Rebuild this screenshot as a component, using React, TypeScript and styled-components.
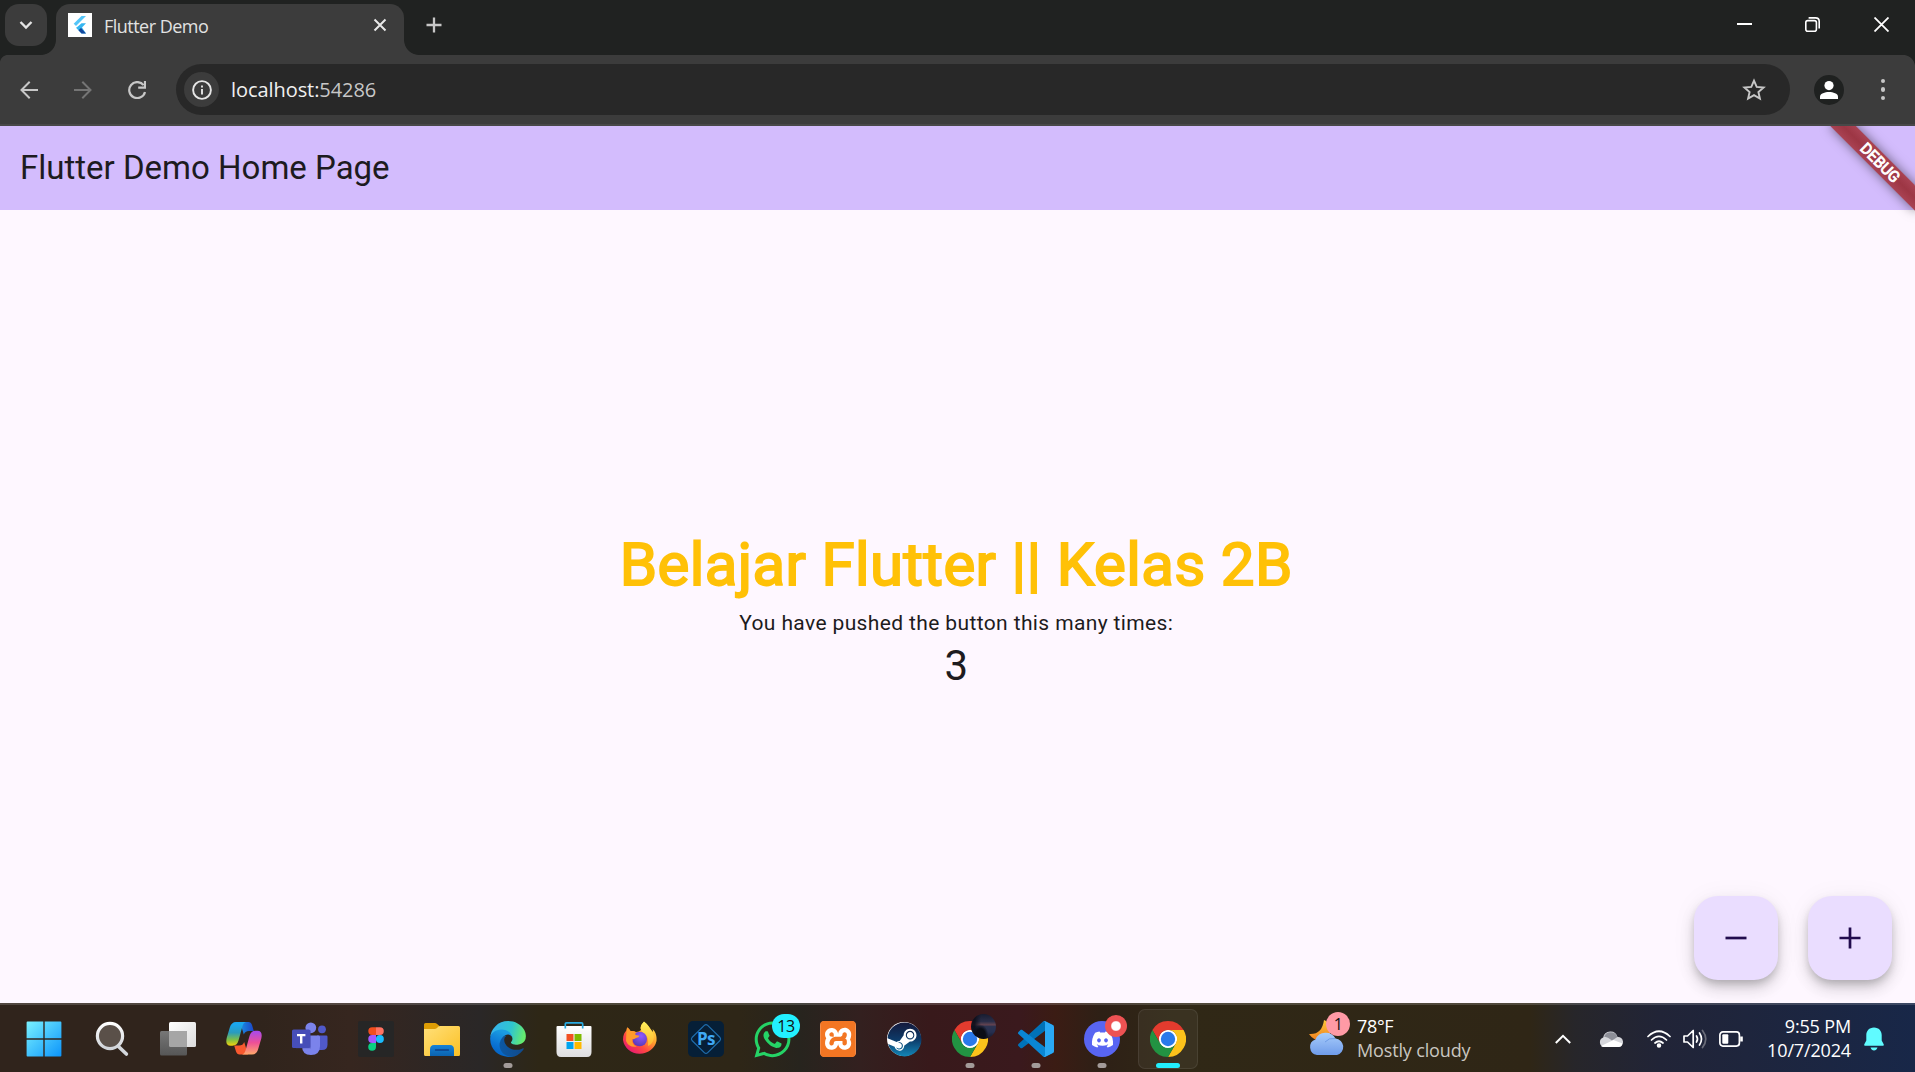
import React, { useState } from "react";
import styled, { createGlobalStyle } from "styled-components";
import { FaWhatsapp, FaSteam, FaDiscord } from "react-icons/fa";
import { SiXampp } from "react-icons/si";

const uiFont = `"Segoe UI", "Open Sans", "Noto Sans", sans-serif`;

const GlobalStyle = createGlobalStyle`
  * { box-sizing: border-box; }
  body { margin: 0; overflow: hidden; }
  button { border: 0; padding: 0; margin: 0; background: none; color: inherit; font: inherit; }
  svg { display: block; flex: none; }
`;

const Desktop = styled.div`
  width: 1915px;
  height: 1072px;
  display: flex;
  flex-direction: column;
  overflow: hidden;
  font-family: ${uiFont};
`;

/* ---------- browser chrome ---------- */

const TabStrip = styled.div`
  height: 55px;
  flex: none;
  display: flex;
  align-items: flex-start;
  padding: 4px 0 0 5px;
  background: #202221;
`;

const TabSearch = styled.button`
  width: 42px;
  height: 42px;
  border-radius: 14px;
  background: #3c3c3c;
  display: grid;
  place-items: center;
`;

const Tab = styled.div`
  position: relative;
  width: 348px;
  height: 51px;
  margin-left: 9px;
  padding: 0 15px 9px 12px;
  display: flex;
  align-items: center;
  border-radius: 14px 14px 0 0;
  background: #3c3c3c;
  color: #e2e2e2;

  &::before, &::after {
    content: "";
    position: absolute;
    bottom: 0;
    width: 15px;
    height: 15px;
  }
  &::before {
    right: 100%;
    background: radial-gradient(circle at 0 0, transparent 14.5px, #3c3c3c 15.3px);
  }
  &::after {
    left: 100%;
    background: radial-gradient(circle at 100% 0, transparent 14.5px, #3c3c3c 15.3px);
  }
`;

const TabTitle = styled.span`
  flex: 1;
  margin-left: 12px;
  padding-top: 2px;
  font-size: 18px;
  line-height: 24px;
  letter-spacing: -0.52px;
`;

const NewTab = styled.button`
  margin: 13px 0 0 22px;
`;

const WindowControls = styled.div`
  margin-left: auto;
  padding: 13px 26px 0 0;
  display: flex;
  gap: 53px;
  svg:last-child { margin-left: 1px; }
`;

const Toolbar = styled.div`
  height: 71px;
  flex: none;
  display: flex;
  align-items: center;
  padding: 0 24px 0 20px;
  border-bottom: 2px solid #484848;
  background:
    radial-gradient(circle at 8px 8px, #3c3c3c 7.6px, #202221 8.4px) 0 0 / 8px 8px no-repeat,
    radial-gradient(circle at 0 12px, #3c3c3c 11.6px, #202221 12.4px) 100% 0 / 12px 12px no-repeat,
    #3c3c3c;
`;

const NavGroup = styled.div`
  display: flex;
  gap: 36px;
`;

const Omnibox = styled.div`
  width: 1614px;
  height: 51px;
  margin-left: 30px;
  padding: 0 24px 0 8px;
  display: flex;
  align-items: center;
  border-radius: 26px;
  background: #282828;
`;

const SiteInfo = styled.span`
  width: 35px;
  height: 35px;
  border-radius: 50%;
  background: #3c3c3c;
  display: grid;
  place-items: center;
`;

const Url = styled.span`
  flex: 1;
  margin-left: 12px;
  font-size: 20px;
  line-height: 28px;
  letter-spacing: -0.07px;
  color: #c7c7c7;
  b { font-weight: 400; color: #f0f0f0; }
`;

const Profile = styled.span`
  width: 30px;
  height: 30px;
  margin-left: 24px;
  border-radius: 50%;
  background: #1f2120;
  display: grid;
  place-items: center;
`;

const Dots = styled.div`
  margin: 0 6px 0 auto;
  display: grid;
  gap: 4.2px;
  i { width: 4.4px; height: 4.4px; border-radius: 50%; background: #c7c7c7; }
`;

/* ---------- app page ---------- */

const Page = styled.main`
  position: relative;
  flex: 1;
  display: flex;
  flex-direction: column;
  overflow: hidden;
  background: #fef7ff;
  color: #1d1b20;
  font-family: Roboto, sans-serif;
`;

const AppBar = styled.header`
  height: 84px;
  flex: none;
  display: flex;
  align-items: center;
  padding: 0 20px;
  background: #d3bcfd;
  font-size: 33px;
  line-height: 42px;
`;

const Center = styled.section`
  flex: 1;
  display: flex;
  flex-direction: column;
  align-items: center;
  justify-content: center;
  padding: 1px 2.5px 0 0;
`;

const Headline = styled.div`
  font-size: 60px;
  line-height: 86px;
  letter-spacing: 0.375px;
  color: #ffc107;
  -webkit-text-stroke: 1.9px #ffc107;
`;

const Caption = styled.div`
  font-size: 21px;
  line-height: 30px;
  letter-spacing: 0.375px;
`;

const Count = styled.div`
  font-size: 42px;
  line-height: 52px;
  padding-top: 2px;
`;

const Fabs = styled.div`
  position: absolute;
  right: 23px;
  bottom: 23px;
  display: flex;
  gap: 30px;
`;

const Fab = styled.button`
  width: 84px;
  height: 84px;
  border-radius: 24px;
  background: #eaddff;
  display: grid;
  place-items: center;
  box-shadow: 0 5px 8px -2px rgba(0, 0, 0, 0.2), 0 9px 15px rgba(0, 0, 0, 0.14), 0 2px 27px rgba(0, 0, 0, 0.05);
`;

const Banner = styled.div`
  position: absolute;
  top: 0;
  right: 0;
  width: 120px;
  height: 110px;
  overflow: hidden;
`;

const Ribbon = styled.div`
  position: absolute;
  top: 41.5px;
  left: 60px;
  width: 120px;
  height: 18px;
  padding-left: 2px;
  transform-origin: 60px -41.5px;
  transform: rotate(45deg);
  background: linear-gradient(180deg, #a94253, #9d3644 50%, #a94253);
  box-shadow: 0 0 12px rgba(0, 0, 0, 0.5);
  color: #fff;
  text-align: center;
  font-size: 15.3px;
  line-height: 18px;
  -webkit-text-stroke: 0.9px #fff;
`;

/* ---------- taskbar ---------- */

const Taskbar = styled.footer`
  height: 69px;
  flex: none;
  display: flex;
  align-items: stretch;
  padding-left: 11px;
  border-top: 2px solid rgba(255, 255, 255, 0.16);
  background: linear-gradient(90deg,
    #30241c 0, #30241c 260px, #36261f 350px, #2a2727 480px, #2e2716 540px, #2e2617 740px,
    #27241e 800px, #33201f 860px, #38191b 930px, #3a191d 1020px, #3b1c14 1055px,
    #2e2016 1100px, #302816 1180px, #2f2616 1530px, #27262a 1575px, #212437 1660px, #182748 1915px) border-box;
  color: #fff;
`;

const Task = styled.div`
  position: relative;
  width: 66px;
  display: grid;
  place-items: center;
  padding-top: 1px;
  &:first-child { margin-right: 2px; }
`;

const ActiveTile = styled.span`
  position: absolute;
  left: 3px;
  top: 4px;
  width: 60px;
  height: 60px;
  border: 1px solid rgba(255, 255, 255, 0.08);
  border-radius: 7px;
  background: rgba(255, 255, 255, 0.05);
`;

const TaskIcon = styled.span`
  position: relative;
  width: 36px;
  height: 36px;
`;

const Indicator = styled.i<{ $active?: boolean }>`
  position: absolute;
  left: 50%;
  top: 58px;
  width: ${(p) => (p.$active ? 24 : 9)}px;
  height: 5px;
  border-radius: 3px;
  transform: translateX(-50%);
  background: ${(p) => (p.$active ? "#22eefc" : "#a39b99")};
`;

const Badge = styled.span<{ $x: number; $y: number; $w: number; $bg: string }>`
  position: absolute;
  left: ${(p) => p.$x}px;
  top: ${(p) => p.$y}px;
  width: ${(p) => p.$w}px;
  height: 24px;
  border-radius: 12px;
  background: ${(p) => p.$bg};
  color: #111;
  font-size: 16px;
  line-height: 24px;
  letter-spacing: -0.4px;
  text-align: center;
`;

const AppTile = styled.span<{ $bg: string; $fg: string }>`
  width: 36px;
  height: 36px;
  border-radius: 5px;
  display: grid;
  place-items: center;
  background: ${(p) => p.$bg};
  color: ${(p) => p.$fg};
  font: 700 17px/36px ${uiFont};
`;

const PsLabel = styled.span`
  grid-area: 1 / 1;
  letter-spacing: -0.6px;
`;

const Weather = styled.div`
  margin-left: 109px;
  width: 242px;
  display: flex;
`;

const WeatherIcon = styled.span`
  position: relative;
  width: 36px;
  height: 36px;
  margin: 15px 1px 0 -1px;
`;

const Lines = styled.div<{ $right?: boolean }>`
  margin-left: ${(p) => (p.$right ? 0 : 11)}px;
  padding-top: 9px;
  display: flex;
  flex-direction: column;
  text-align: ${(p) => (p.$right ? "right" : "left")};
  font-size: 18px;
  line-height: 24px;
  letter-spacing: ${(p) => (p.$right ? -0.15 : -0.35)}px;
  white-space: nowrap;
`;

const Muted = styled.span`
  color: #c9c6c0;
  letter-spacing: -0.15px;
`;

const Tray = styled.div`
  flex: 1;
  display: flex;
  align-items: center;
  padding-top: 1px;
`;

const TraySlot = styled.span<{ $ml: number }>`
  margin-left: ${(p) => p.$ml}px;
`;

const Clock = styled.div`
  width: 108px;
  align-self: flex-start;
  margin-top: -1px;
`;

const Chrome = () => (
  <svg width="36" height="36" viewBox="0 0 48 48">
    <circle cx="24" cy="24" r="12.4" fill="#fff" />
    <path fill="#e33b2e" d="M24,12H44.7812a23.9939,23.9939,0,0,0-41.5639.0029L13.6079,30l.0093-.0024A11.9852,11.9852,0,0,1,24,12Z" />
    <path fill="#fcc21b" d="M34.3913,30.0029,24.0007,48A23.994,23.994,0,0,0,44.78,12.0031H23.9989l-.0025.0093A11.985,11.985,0,0,1,34.3913,30.0029Z" />
    <path fill="#229342" d="M13.6086,30.0031,3.218,12.006A23.994,23.994,0,0,0,24.0025,48L34.3931,30.0029l-.0067-.0068a11.9852,11.9852,0,0,1-20.7778.007Z" />
    <circle cx="24" cy="24" r="9.6" fill="#2a79ea" />
  </svg>
);

const Windows = () => (
  <svg width="36" height="36" viewBox="0 0 36 36">
    <defs>
      <linearGradient id="win" x1="0" y1="0" x2="36" y2="36" gradientUnits="userSpaceOnUse">
        <stop stopColor="#7bf3ff" /><stop offset="1" stopColor="#0a93fb" />
      </linearGradient>
    </defs>
    <path fill="url(#win)" d="M1.5 .6H17.3V17.3H.6V1.5Q.6 .6 1.5 .6ZM18.7 .6H34.5Q35.4 .6 35.4 1.5V17.3H18.7ZM.6 18.7H17.3V35.4H1.5Q.6 35.4 .6 34.5ZM18.7 18.7H35.4V34.5Q35.4 35.4 34.5 35.4H18.7Z" />
  </svg>
);

const Search = () => (
  <svg width="36" height="36" viewBox="0 0 36 36">
    <defs>
      <linearGradient id="lens" x1="0" y1="0" x2="0" y2="1"><stop stopColor="#fff" /><stop offset="1" stopColor="#cfd3d8" /></linearGradient>
    </defs>
    <path d="M24.5 25.5 32.4 33" stroke="#d3d7dc" strokeWidth="3.6" strokeLinecap="round" />
    <circle cx="16" cy="15" r="12.6" fill="#5a5049" stroke="url(#lens)" strokeWidth="3.2" />
  </svg>
);

const TaskView = () => (
  <svg width="36" height="36" viewBox="0 0 36 36">
    <defs>
      <linearGradient id="tv1" x1="0" y1="0" x2="1" y2="1"><stop stopColor="#fff" /><stop offset="1" stopColor="#dcdcdc" /></linearGradient>
      <linearGradient id="tv2" x1="0" y1="0" x2="0" y2="1"><stop stopColor="#777" /><stop offset="1" stopColor="#565656" /></linearGradient>
    </defs>
    <rect x="9" y="1" width="27" height="25" rx="1.5" fill="url(#tv1)" />
    <rect x="0" y="10" width="27" height="24.5" rx="1.5" fill="url(#tv2)" />
    <path d="M9 10H27V26H10.5Q9 26 9 24.5Z" fill="#a6a6a6" />
  </svg>
);

const Copilot = () => (
  <svg width="36" height="36" viewBox="0 0 36 36">
    <defs>
      <linearGradient id="cp1" x1="0" y1="0" x2="0" y2="1"><stop offset=".1" stopColor="#1aa7ee" /><stop offset=".45" stopColor="#2a9bbd" /><stop offset=".75" stopColor="#7fbf45" /><stop offset="1" stopColor="#f4d00c" /></linearGradient>
      <linearGradient id="cp2" x1="0" y1="0" x2="0" y2="1"><stop stopColor="#a54af0" /><stop offset=".5" stopColor="#ee5096" /><stop offset="1" stopColor="#ffa96b" /></linearGradient>
      <linearGradient id="cp3" x1="0" y1="0" x2="1" y2="0"><stop stopColor="#1b8de0" /><stop offset="1" stopColor="#1b45c8" /></linearGradient>
    </defs>
    <path fill="url(#cp3)" d="M14 1H22.5Q25 1 26 4L27.8 10H23Q19 10 17.8 13.6Z" />
    <path fill="#f8592f" d="M22 33.5H13.5Q11 33.5 10 30.500L8.200 24.500H13Q17 24.500 18.200 21Z" />
    <path fill="url(#cp1)" d="M10 1H20Q17.500 1.500 16.500 5L12.500 19.500Q11 24.700 6.500 24.700H4.500Q-1 24.500 .7 17L3.800 6.500Q5.500 1 10 1Z" />
    <path fill="url(#cp2)" d="M26 33.500H16Q18.500 33 19.500 29.500L23.500 15Q25 9.800 29.500 9.800H31.500Q37 10 35.300 17.500L32.200 28Q30.500 33.500 26 33.500Z" />
  </svg>
);

const Teams = () => (
  <svg width="36" height="36" viewBox="0 0 36 36">
    <circle cx="30" cy="8.300" r="3.900" fill="#5059c9" />
    <path d="M25 14.500H34.300Q35.500 14.500 35.500 15.700V23.500Q35.500 29 30 29H25Z" fill="#5059c9" />
    <circle cx="18.800" cy="6.800" r="5.400" fill="#7b83eb" />
    <path d="M11 14.500H26.500Q28 14.500 28 16V25Q28 34 19 34T10 25V15.500Z" fill="#7b83eb" />
    <rect x="4" y="9.500" width="15" height="18" fill="#3f459f" opacity=".35" />
    <rect x="0" y="8.500" width="18.300" height="18.500" rx="1.600" fill="#464eb8" />
    <path d="M5 13H13.400V15.200H10.400V22.400H8V15.200H5Z" fill="#fff" />
  </svg>
);

const Figma = () => (
  <svg width="36" height="36" viewBox="0 0 36 36">
    <rect width="36" height="36" rx="2" fill="#262626" />
    <path d="M14.200 6.200H18V14H14.200A3.900 3.900 0 0 1 14.200 6.200Z" fill="#f24e1e" />
    <path d="M18 6.200H21.900A3.900 3.900 0 0 1 21.900 14H18Z" fill="#ff7262" />
    <path d="M14.200 14H18V21.900H14.200A3.900 3.900 0 0 1 14.200 14Z" fill="#a259ff" />
    <circle cx="21.900" cy="18" r="3.950" fill="#1abcfe" />
    <path d="M14.200 21.900H18V25.800A3.900 3.900 0 1 1 14.200 21.900Z" fill="#0acf83" />
  </svg>
);

const Folder = () => (
  <svg width="36" height="36" viewBox="0 0 36 36">
    <defs>
      <linearGradient id="fd1" x1="0" y1="0" x2="1" y2="1"><stop stopColor="#ffe07a" /><stop offset="1" stopColor="#fcc024" /></linearGradient>
      <linearGradient id="fd2" x1="0" y1="0" x2="0" y2="1"><stop stopColor="#1582d8" /><stop offset="1" stopColor="#0b63b0" /></linearGradient>
    </defs>
    <path d="M0 3.500Q0 2 1.500 2H11Q12 2 12.800 2.700L15.500 5V14H0Z" fill="#dd9c04" />
    <path d="M0 8H10.500Q12 8 13 7L14.500 5.500Q15.200 5 16 5H34.500Q36 5 36 6.500V33.500Q36 35 34.500 35H1.500Q0 35 0 33.500Z" fill="url(#fd1)" />
    <path d="M6 35V28.500Q6 24 10 24H26Q30 24 30 28.500V35Z" fill="url(#fd2)" />
    <path d="M11.500 29H24.500" stroke="#0c3f86" strokeWidth="1.300" strokeLinecap="round" />
  </svg>
);

const Edge = () => (
  <svg width="36" height="36" viewBox="0 0 256 258">
    <defs>
      <linearGradient id="ed1" x1="60" y1="177" x2="241" y2="177" gradientUnits="userSpaceOnUse"><stop stopColor="#0c59a4" /><stop offset="1" stopColor="#114a8b" /></linearGradient>
      <linearGradient id="ed2" x1="120" y1="90" x2="60" y2="220" gradientUnits="userSpaceOnUse"><stop stopColor="#1b9de2" /><stop offset=".7" stopColor="#0b74d4" /><stop offset="1" stopColor="#0668c9" /></linearGradient>
      <linearGradient id="ed3" x1="20" y1="60" x2="240" y2="120" gradientUnits="userSpaceOnUse"><stop stopColor="#35b4ea" /><stop offset=".55" stopColor="#2fc6cf" /><stop offset="1" stopColor="#66eb6e" /></linearGradient>
    </defs>
    <path fill="url(#ed1)" d="M235.680 195.460a93.730 93.730 0 01-10.540 4.710 101.870 101.870 0 01-35.900 6.460c-47.320 0-88.540-32.550-88.540-74.320A31.480 31.480 0 01117.130 105c-42.800 1.800-53.800 46.400-53.800 72.530 0 73.880 68.090 81.370 82.760 81.370 7.910 0 19.840-2.300 27-4.560l1.310-.44a128.340 128.340 0 0066.600-52.800 4 4 0 00-5.320-5.640z" />
    <path fill="url(#ed2)" d="M105.730 241.420A79.200 79.200 0 0183 220.080a80.720 80.720 0 0129.530-120c3.120-1.470 8.450-4.130 15.540-4a32.350 32.350 0 0125.690 13 31.880 31.880 0 016.360 18.660c0-.21 24.460-79.600-80-79.600-43.900 0-80 41.660-80 78.210a130.150 130.150 0 0012.110 56 128 128 0 00156.380 67.110 75.550 75.550 0 01-62.780-8z" />
    <path fill="url(#ed3)" d="M152.330 148.860c-.81 1.050-3.300 2.500-3.300 5.660 0 2.610 1.700 5.120 4.720 7.230 14.380 10 41.490 8.680 41.560 8.680a59.560 59.560 0 0030.270-8.350A61.380 61.380 0 00256 109.060c.26-22.410-8-37.310-11.340-43.910C223.460 23.840 177.720 0 128 0A128 128 0 000 126.200c.48-36.540 36.800-66.050 80-66.050 3.500 0 23.460.34 42 10.070 16.340 8.580 24.900 18.940 30.850 29.210 6.180 10.670 7.280 24.150 7.280 29.520s-2.740 13.330-7.780 19.910z" />
  </svg>
);

const Store = () => (
  <svg width="36" height="36" viewBox="0 0 36 36">
    <defs>
      <linearGradient id="st" x1="0" y1="0" x2="0" y2="1"><stop stopColor="#fff" /><stop offset="1" stopColor="#dedee0" /></linearGradient>
    </defs>
    <path d="M.5 6Q.5 5 1.500 5H34.500Q35.500 5 35.500 6V31Q35.500 36 31 36H5Q.5 36 .5 31Z" fill="url(#st)" />
    <path d="M9.300 7.500V3Q9.300 1.800 10.500 1.800H25.500Q26.700 1.800 26.700 3V7.500" fill="none" stroke="#29abe2" strokeWidth="1.700" />
    <path d="M10.500 13H17.500V20H10.500Z" fill="#f25022" />
    <path d="M18.500 13H25.500V20H18.500Z" fill="#7fba00" />
    <path d="M10.500 21H17.500V28H10.500Z" fill="#00a4ef" />
    <path d="M18.500 21H25.500V28H18.500Z" fill="#ffb900" />
  </svg>
);

const Firefox = () => (
  <svg width="36" height="36" viewBox="0 0 36 36">
    <defs>
      <linearGradient id="ff1" x1="30" y1="4" x2="8" y2="33" gradientUnits="userSpaceOnUse"><stop stopColor="#ffe14a" /><stop offset=".35" stopColor="#ffa02c" /><stop offset=".65" stopColor="#ff4a3f" /><stop offset="1" stopColor="#e3127a" /></linearGradient>
      <linearGradient id="ff2" x1="0" y1="0" x2="0" y2="1"><stop stopColor="#fff15c" /><stop offset="1" stopColor="#ffb52d" /></linearGradient>
      <radialGradient id="ff3" cx=".6" cy=".3" r=".7"><stop stopColor="#9059ff" /><stop offset="1" stopColor="#5a3bb8" /></radialGradient>
    </defs>
    <path fill="url(#ff1)" d="M22 1C27 4 28 8 31 11Q31 9 30.500 8C34 11 35 16 34.500 20A17 16 0 0 1 1 19C1 14 2.500 11 4.500 9.500L5 6.500Q7 7 8.500 10Q12 9.500 14 11Q17 11 19 9Q17.500 4 22 1Z" />
    <path fill="url(#ff2)" d="M22 .6C26 3.500 27.500 7.500 30.500 11.500C34 17 30 24 26 25Q27.500 15 21 12Q16 7 22 .6Z" />
    <circle cx="17.700" cy="18" r="7.300" fill="url(#ff3)" />
    <path fill="#ff9a2b" d="M4.500 9.500 5.200 6.300Q7 7.300 8.500 10Q11.500 9.500 13.800 11.200Q13 12.500 13.500 14L17.500 14.700Q17 16.700 14 17Q12.500 18.500 10.500 18Q9.800 24 15 25.500Q7 27 4 20Z" />
  </svg>
);

const PsFrame = styled.svg`
  grid-area: 1 / 1;
`;

const Photoshop = () => (
  <AppTile $bg="#061f37" $fg="#3fa9f5">
    <PsFrame width="36" height="36" viewBox="0 0 36 36">
      <path d="M16.300 4.400Q18 2.800 19.700 4.400L32 16.500Q33.200 18 32 19.500L19.700 31.600Q18 33.200 16.300 31.600L4 19.500Q2.800 18 4 16.500Z" fill="none" stroke="#1f6dac" strokeWidth="1.200" />
    </PsFrame>
    <PsLabel>Ps</PsLabel>
  </AppTile>
);

const Xampp = () => (
  <AppTile $bg="#fff" $fg="#f37623">
    <SiXampp size={36} />
  </AppTile>
);

const SteamDisc = styled.span`
  width: 34px;
  height: 34px;
  margin: 1px;
  border-radius: 50%;
  display: grid;
  place-items: center;
  background: #fff;
  svg path { fill: url(#steam); }
`;

const Steam = () => (
  <SteamDisc>
    <svg width="0" height="0" style={{ position: "absolute" }}>
      <defs>
        <linearGradient id="steam" x1="0" y1="0" x2="0" y2="1"><stop stopColor="#14193c" /><stop offset=".5" stopColor="#0d3a68" /><stop offset="1" stopColor="#1387b8" /></linearGradient>
      </defs>
    </svg>
    <FaSteam size={35} />
  </SteamDisc>
);

const VsCode = () => (
  <svg width="36" height="36" viewBox="0 0 100 100">
    <path fill="#0072b8" d="M96.461 10.796L75.857.876C73.472-.273 70.622.212 68.750 2.083L1.299 63.583C-.516 65.237-.514 68.094 1.303 69.745L6.813 74.754C8.298 76.104 10.535 76.204 12.134 74.990L93.361 13.370C96.086 11.303 100 13.246 100 16.667V16.427C100 14.027 98.625 11.838 96.461 10.796Z" />
    <path fill="#0a86d4" d="M96.461 89.204L75.857 99.125C73.472 100.273 70.622 99.788 68.750 97.917L1.299 36.417C-.516 34.763-.514 31.906 1.303 30.255L6.813 25.246C8.298 23.896 10.535 23.796 12.134 25.010L93.361 86.630C96.086 88.697 100 86.754 100 83.333V83.573C100 85.974 98.625 88.162 96.461 89.204Z" />
    <path fill="#2aa9f5" d="M75.858 99.126C73.472 100.274 70.622 99.789 68.750 97.917C71.056 100.223 75 98.590 75 95.328V4.672C75 1.410 71.056-.223 68.750 2.083C70.622.211 73.472-.274 75.858.874L96.459 10.781C98.623 11.822 100 14.011 100 16.413V83.587C100 85.989 98.623 88.179 96.459 89.220L75.858 99.126Z" />
  </svg>
);

const DiscordDisc = styled.span`
  width: 36px;
  height: 36px;
  border-radius: 50%;
  display: grid;
  place-items: center;
  background: #5865f2;
  color: #fff;
`;

const Avatar = styled.span`
  position: absolute;
  left: 19px;
  top: -7px;
  width: 25px;
  height: 25px;
  border-radius: 50%;
  background:
    linear-gradient(90deg, rgba(10, 12, 22, 0.85) 15%, rgba(10, 12, 22, 0) 40%),
    radial-gradient(ellipse at 38% 85%, #0b0d16 0 22%, rgba(11, 13, 22, 0) 36%),
    linear-gradient(180deg, #171c30 0, #2b2e48 30%, #4d3c4e 38%, #644350 43%, #2c3350 50%, #262f50 72%, #141827 100%);
`;

const RecordBadge = styled.span`
  position: absolute;
  left: 21px;
  top: -6px;
  width: 22px;
  height: 22px;
  border-radius: 50%;
  background: radial-gradient(circle, #fff 4.200px, #ee5253 5.500px);
`;

type TaskItem = { name: string; icon: React.ReactNode; running?: boolean; active?: boolean };

const tasks: TaskItem[] = [
  { name: "start", icon: <Windows /> },
  { name: "search", icon: <Search /> },
  { name: "task-view", icon: <TaskView /> },
  { name: "copilot", icon: <Copilot /> },
  { name: "teams", icon: <Teams /> },
  { name: "figma", icon: <Figma /> },
  { name: "explorer", icon: <Folder /> },
  { name: "edge", icon: <Edge />, running: true },
  { name: "store", icon: <Store /> },
  { name: "firefox", icon: <Firefox /> },
  { name: "photoshop", icon: <Photoshop /> },
  { name: "whatsapp", icon: <><FaWhatsapp size={41} color="#25d366" style={{ margin: "-2px -2.5px" }} /><Badge $x={18} $y={-7} $w={28} $bg="#22f0ff">13</Badge></> },
  { name: "xampp", icon: <Xampp /> },
  { name: "steam", icon: <Steam /> },
  { name: "chrome-profile", icon: <><Chrome /><Avatar /></>, running: true },
  { name: "vscode", icon: <VsCode />, running: true },
  { name: "discord", icon: <><DiscordDisc><FaDiscord size={23} /></DiscordDisc><RecordBadge /></>, running: true },
  { name: "chrome", icon: <Chrome />, running: true, active: true },
];

export default function App() {
  const [count, setCount] = useState(3);
  return (
    <Desktop>
      <GlobalStyle />
      <TabStrip>
        <TabSearch>
          <svg width="14" height="10" viewBox="0 0 14 10"><path d="M1.500 2 7 7.500 12.500 2" fill="none" stroke="#e4e4e4" strokeWidth="2.400" /></svg>
        </TabSearch>
        <Tab>
          <svg width="24" height="24" viewBox="0 0 24 24">
            <rect width="24" height="24" fill="#fff" />
            <path d="M13.500 3H18L8 13 5.700 10.800Z" fill="#54c5f8" />
            <path d="M13.500 10.300H18L14 14.400 18 20.500H13.500L8 14.800 9.800 13.500Z" fill="#35b5f0" />
            <path d="M10.500 17.300 13 15 18 20.500H13.500Z" fill="#15479c" />
          </svg>
          <TabTitle>Flutter Demo</TabTitle>
          <svg width="18" height="18" viewBox="0 0 18 18"><path d="M3.500 3.500 14.500 14.500M14.500 3.500 3.500 14.500" stroke="#e8e8e8" strokeWidth="2" /></svg>
        </Tab>
        <NewTab>
          <svg width="16" height="16" viewBox="0 0 16 16"><path d="M8 .5V15.500M.5 8H15.500" stroke="#c7c7c7" strokeWidth="2.300" /></svg>
        </NewTab>
        <WindowControls>
          <svg width="15" height="15" viewBox="0 0 15 15"><path d="M0 7H15" stroke="#fff" strokeWidth="2" /></svg>
          <svg width="15" height="15" viewBox="0 0 15 15" fill="none" stroke="#fff" strokeWidth="1.600"><rect x=".8" y="3.600" width="10.600" height="10.600" rx="2" /><path d="M3.600 .9H10.500Q14.200 .9 14.200 4.500V11.400" /></svg>
          <svg width="15" height="15" viewBox="0 0 15 15"><path d="M.5 .5 14.500 14.500M14.500 .5 .5 14.500" stroke="#fff" strokeWidth="1.800" /></svg>
        </WindowControls>
      </TabStrip>
      <Toolbar>
        <NavGroup>
          <svg width="18" height="18" viewBox="0 0 18 18" fill="none" stroke="#c7c7c7" strokeWidth="2"><path d="M18 9H1.800M9.700 .8 1.500 9 9.700 17.200" /></svg>
          <svg width="18" height="18" viewBox="0 0 18 18" fill="none" stroke="#757575" strokeWidth="2"><path d="M0 9H16.200M8.300 .8 16.500 9 8.300 17.200" /></svg>
          <svg width="18" height="18" viewBox="0 0 18 18" fill="none" stroke="#c7c7c7" strokeWidth="2.200"><path d="M15.600 4.200A8 8 0 1 0 17 11M17 0V6.600H10.200" /></svg>
        </NavGroup>
        <Omnibox>
          <SiteInfo>
            <svg width="20" height="20" viewBox="0 0 20 20"><circle cx="10" cy="10" r="8.900" fill="none" stroke="#e6e6e6" strokeWidth="1.900" /><path d="M10 9V14.500M10 5.500V7.500" stroke="#e6e6e6" strokeWidth="1.900" /></svg>
          </SiteInfo>
          <Url><b>localhost:</b>54286</Url>
          <svg width="24" height="23" viewBox="0 0 24 23"><path d="M12 2.600 14.700 8.900 21.600 9.500 16.400 14 17.900 20.600 12 17.100 6.100 20.600 7.600 14 2.400 9.500 9.300 8.900Z" fill="none" stroke="#c7c7c7" strokeWidth="1.900" /></svg>
        </Omnibox>
        <Profile>
          <svg width="18" height="18" viewBox="0 0 18 18" fill="#fff"><circle cx="9" cy="4.600" r="4.600" /><path d="M0 18V15.500C0 12.500 5 11 9 11S18 12.500 18 15.500V18Z" /></svg>
        </Profile>
        <Dots><i /><i /><i /></Dots>
      </Toolbar>

      <Page>
        <AppBar>Flutter Demo Home Page</AppBar>
        <Center>
          <Headline>Belajar Flutter || Kelas 2B</Headline>
          <Caption>You have pushed the button this many times:</Caption>
          <Count>{count}</Count>
        </Center>
        <Fabs>
          <Fab aria-label="Decrement" onClick={() => setCount(count - 1)}>
            <svg width="22" height="22" viewBox="0 0 22 22"><path d="M.5 11H21.500" stroke="#220c4e" strokeWidth="2.700" /></svg>
          </Fab>
          <Fab aria-label="Increment" onClick={() => setCount(count + 1)}>
            <svg width="22" height="22" viewBox="0 0 22 22"><path d="M.5 11H21.500M11 .5V21.500" stroke="#220c4e" strokeWidth="2.700" /></svg>
          </Fab>
        </Fabs>
        <Banner><Ribbon>DEBUG</Ribbon></Banner>
      </Page>

      <Taskbar>
        {tasks.map((t) => (
          <Task key={t.name}>
            {t.active && <ActiveTile />}
            <TaskIcon>{t.icon}</TaskIcon>
            {t.running && <Indicator $active={t.active} />}
          </Task>
        ))}
        <Weather>
          <WeatherIcon>
            <svg width="36" height="36" viewBox="0 0 36 36">
              <defs>
                <linearGradient id="moon" x1="0" y1="0" x2="0" y2="1"><stop stopColor="#ffc83a" /><stop offset="1" stopColor="#ef7d1d" /></linearGradient>
                <linearGradient id="cloud" x1="0" y1="0" x2="0" y2="1"><stop stopColor="#a9cdfb" /><stop offset="1" stopColor="#6f9cea" /></linearGradient>
              </defs>
              <path d="M15 0C24 3 24 20 12 21Q4 20 0 14Q13 15 15 0Z" fill="url(#moon)" />
              <path d="M8 35A8 8 0 0 1 6.500 19.500A11 10.500 0 0 1 26.500 18.500A8.400 8.400 0 0 1 28 35Z" fill="url(#cloud)" />
              <path d="M16 22Q20 17.500 26 18.500" fill="none" stroke="#6f9ce6" strokeWidth="1" />
            </svg>
            <Badge $x={17} $y={-8} $w={24} $bg="#ff9aa5">1</Badge>
          </WeatherIcon>
          <Lines><span>78°F</span><Muted>Mostly cloudy</Muted></Lines>
        </Weather>
        <Tray>
          <TraySlot $ml={3}><svg width="16" height="10" viewBox="0 0 16 10"><path d="M.8 9 8 1.800 15.200 9" fill="none" stroke="#fff" strokeWidth="2" /></svg></TraySlot>
          <TraySlot $ml={28}>
            <svg width="24" height="16" viewBox="0 0 24 16">
              <path d="M4.500 16A5 5 0 0 1 4.200 6.500A7.300 7.300 0 0 1 18.500 6A5 5 0 0 1 19.500 16Z" fill="#d6d7dc" />
              <path d="M5 5.500A7.300 7.300 0 0 1 18.500 6L13 9.500Q9 5.800 5 5.500Z" fill="#8d8f98" />
              <path d="M2 15 14.500 9 23.500 12.500Q22.800 16 19.500 16H4.500Q3 16 2 15Z" fill="#fff" />
            </svg>
          </TraySlot>
          <TraySlot $ml={24}>
            <svg width="24" height="18" viewBox="0 0 24 18" fill="none" stroke="#fff" strokeWidth="1.700" strokeLinecap="round">
              <path d="M1 6.500Q12-4 23 6.500M4.500 10Q12 2.800 19.500 10M8 13Q12 9.500 16 13" /><circle cx="12" cy="15.600" r="1.400" fill="#fff" />
            </svg>
          </TraySlot>
          <TraySlot $ml={12}>
            <svg width="24" height="20" viewBox="0 0 24 20" fill="none" stroke="#fff" strokeWidth="1.700" strokeLinecap="round" strokeLinejoin="round">
              <path d="M1 7H4.500L10.200 1.500V18.500L4.500 13H1Z" /><path d="M13.500 7Q15.500 10 13.500 13M16.500 4Q20.500 10 16.500 16" /><path d="M19.500 1.500Q26 10 19.500 18.500" stroke="#6a6c79" />
            </svg>
          </TraySlot>
          <TraySlot $ml={12}>
            <svg width="24" height="16" viewBox="0 0 24 16" fill="none" stroke="#fff" strokeWidth="1.700">
              <rect x=".9" y=".9" width="19.500" height="14.200" rx="3" /><rect x="3.300" y="3.300" width="6" height="9.400" rx="1" fill="#fff" stroke="none" /><path d="M22.500 5.500V10.500" strokeWidth="2.600" />
            </svg>
          </TraySlot>
          <Clock><Lines $right><span>9:55 PM</span><span>10/7/2024</span></Lines></Clock>
          <TraySlot $ml={13}>
            <svg width="20" height="24" viewBox="0 0 20 24" fill="#60fbff">
              <path d="M10 .5C5 .5 2.300 4.200 2.300 8V13.500L.2 17.500Q0 18.700 1 18.700H19Q20 18.700 19.800 17.500L17.700 13.500V8C17.700 4.200 15 .5 10 .5Z" /><path d="M6.500 20.500H13.500Q12.500 23.500 10 23.500T6.500 20.500Z" />
            </svg>
          </TraySlot>
        </Tray>
      </Taskbar>
    </Desktop>
  );
}
